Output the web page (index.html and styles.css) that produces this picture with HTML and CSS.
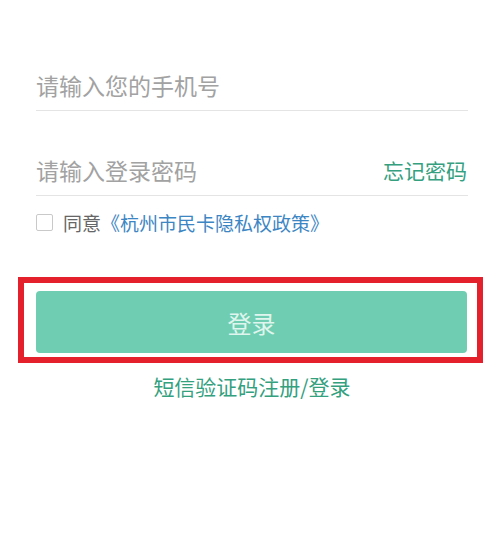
FILE: index.html
```html
<!DOCTYPE html>
<html lang="zh-CN">
<head>
    <meta charset="UTF-8">
    <meta name="viewport" content="width=device-width, initial-scale=1.0">
    <title>登录</title>
    <link rel="stylesheet" href="styles.css">
</head>
<body>
    <div class="login">
        <div class="field">
            <input class="field-input" type="tel" placeholder="请输入您的手机号">
        </div>
        <div class="field">
            <input class="field-input" type="password" placeholder="请输入登录密码">
            <a class="forgot" href="#">忘记密码</a>
        </div>
        <label class="agree">
            <span class="checkbox"></span>
            <span>同意</span><a class="policy" href="#">《杭州市民卡隐私权政策》</a>
        </label>
        <div class="highlight">
            <button class="submit" type="button">登录</button>
        </div>
        <a class="sms" href="#">短信验证码注册/登录</a>
    </div>
</body>
</html>
```

FILE: styles.css
```css
* {
    box-sizing: border-box;
}
body {
    margin: 0;
    background-color: #fff;
    font-family: "Noto Sans CJK SC", "Noto Sans", sans-serif;
}
a {
    text-decoration: none;
}
.login {
    display: flex;
    flex-direction: column;
    padding: 64px 27px 0 36px;
}
.field {
    display: flex;
    align-items: center;
    height: 47px;
    padding-bottom: 5px;
    border-bottom: 1px solid #e4e4e4;
}
.field + .field {
    margin-top: 38px;
}
.field-input {
    flex: 1;
    min-width: 0;
    border: none;
    outline: none;
    padding: 0;
    font-family: inherit;
    font-size: 23px;
    color: #333;
    background: transparent;
}
.field-input::placeholder {
    color: #a2a2a2;
}
.forgot {
    font-size: 21px;
    color: #35a07f;
    margin-right: 1px;
}
.agree {
    display: flex;
    align-items: center;
    height: 36px;
    margin-top: 8px;
    font-size: 19px;
    color: #666;
}
.checkbox {
    width: 17px;
    height: 17px;
    border: 1px solid #c9c9c9;
    border-radius: 2px;
    margin-right: 10px;
}
.policy {
    color: #3d86c4;
}
.highlight {
    margin: 37px -15px 0 -18px;
    padding: 8px 10px 4px 12px;
    border: 6px solid #e3202b;
}
.submit {
    display: block;
    width: 100%;
    height: 62px;
    border: none;
    border-radius: 4px;
    background-color: #6fcdb1;
    color: #dff5ee;
    font-family: inherit;
    font-size: 24px;
}
.sms {
    align-self: center;
    margin-top: 8px;
    font-size: 21px;
    color: #33a07e;
}
```
